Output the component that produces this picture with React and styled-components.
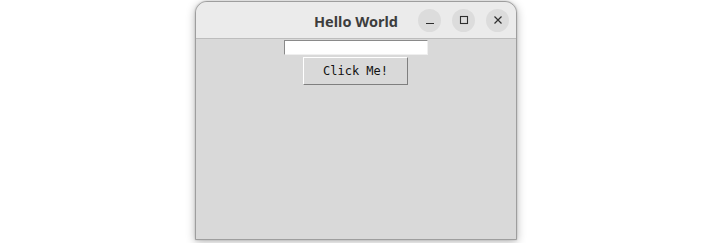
import React from 'react'
import styled, { createGlobalStyle } from 'styled-components'

const Global = createGlobalStyle`
  html, body {
    margin: 0;
    padding: 0;
    background: #ffffff;
  }
`

const Page = styled.div`
  width: 710px;
  height: 243px;
  padding-top: 1px;
  padding-left: 195px;
  box-sizing: border-box;
  overflow: hidden;
`

const Window = styled.div`
  width: 322px;
  height: 239px;
  box-sizing: border-box;
  border: 1px solid #9e9e9e;
  border-radius: 12px 12px 0 0;
  background: #d9d9d9;
  box-shadow: 0 2px 10px rgba(0, 0, 0, 0.28), 0 0 2px rgba(0, 0, 0, 0.2);
  display: flex;
  flex-direction: column;
  overflow: hidden;
`

const TitleBar = styled.div`
  height: 36px;
  flex: none;
  background: #ebebeb;
  border-bottom: 1px solid #bdbdbd;
  display: grid;
  grid-template-columns: 1fr auto 1fr;
  align-items: center;
  padding: 0 7px;
`

const Title = styled.div`
  grid-column: 2;
  font-family: 'Noto Sans', 'DejaVu Sans', sans-serif;
  font-weight: 700;
  font-size: 14.5px;
  color: #3d3d3d;
  margin-top: 1px;
`

const Controls = styled.div`
  grid-column: 3;
  justify-self: end;
  display: flex;
  gap: 11px;
`

const RoundButton = styled.div`
  width: 23px;
  height: 23px;
  border-radius: 50%;
  background: #dcdcdc;
  display: flex;
  align-items: center;
  justify-content: center;
  color: #2e2e2e;
`

const Content = styled.div`
  flex: 1;
  display: flex;
  flex-direction: column;
  align-items: center;
  padding-top: 1px;
`

const Entry = styled.div`
  width: 144px;
  height: 15px;
  box-sizing: border-box;
  background: #ffffff;
  border-top: 1px solid #8a8a8a;
  border-left: 1px solid #8a8a8a;
  border-bottom: 1px solid #efefef;
  border-right: 1px solid #efefef;
`

const Button = styled.div`
  margin-top: 2px;
  margin-right: 1px;
  width: 105px;
  height: 28px;
  box-sizing: border-box;
  border-top: 1px solid #ffffff;
  border-left: 1px solid #ffffff;
  border-bottom: 1px solid #7f7f7f;
  border-right: 1px solid #7f7f7f;
  background: #d9d9d9;
  display: flex;
  align-items: center;
  justify-content: center;
  font-family: 'DejaVu Sans Mono', 'Liberation Mono', monospace;
  font-size: 12px;
  color: #111;
`

const App = () => {
  return (
    <Page>
      <Global />
      <Window>
        <TitleBar>
          <Title>Hello World</Title>
          <Controls>
            <RoundButton>
              <svg width="10" height="10" viewBox="0 0 10 10">
                <path d="M1 8.5h8" stroke="currentColor" strokeWidth="1.2" />
              </svg>
            </RoundButton>
            <RoundButton>
              <svg width="10" height="10" viewBox="0 0 10 10">
                <rect x="1.5" y="1.5" width="7" height="7" fill="none" stroke="currentColor" strokeWidth="1.1" />
              </svg>
            </RoundButton>
            <RoundButton>
              <svg width="10" height="10" viewBox="0 0 10 10">
                <path d="M1.5 1.5l7 7M8.5 1.5l-7 7" stroke="currentColor" strokeWidth="1.2" />
              </svg>
            </RoundButton>
          </Controls>
        </TitleBar>
        <Content>
          <Entry />
          <Button>Click Me!</Button>
        </Content>
      </Window>
    </Page>
  )
}

export default App
